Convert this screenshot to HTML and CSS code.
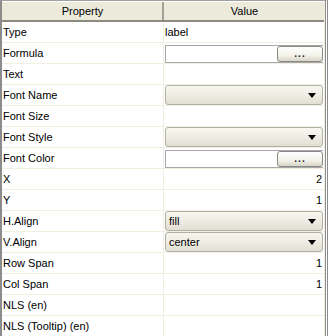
FILE: index.html
```html
<!DOCTYPE html>
<html lang="en">
<head>
    <meta charset="UTF-8">
    <title>Properties</title>
    <link rel="stylesheet" href="styles.css">
</head>
<body>
    <div class="panel">
        <div class="sheet">
            <div class="row head">
                <div class="cell key">Property</div>
                <div class="cell val">Value</div>
            </div>

            <div class="row">
                <div class="cell key">Type</div>
                <div class="cell val">label</div>
            </div>
            <div class="row">
                <div class="cell key">Formula</div>
                <div class="cell val">
                    <div class="field"><span class="dots">...</span></div>
                </div>
            </div>
            <div class="row">
                <div class="cell key">Text</div>
                <div class="cell val"></div>
            </div>
            <div class="row">
                <div class="cell key">Font Name</div>
                <div class="cell val">
                    <div class="combo"><span></span><i class="arrow"></i></div>
                </div>
            </div>
            <div class="row">
                <div class="cell key">Font Size</div>
                <div class="cell val"></div>
            </div>
            <div class="row">
                <div class="cell key">Font Style</div>
                <div class="cell val">
                    <div class="combo"><span></span><i class="arrow"></i></div>
                </div>
            </div>
            <div class="row">
                <div class="cell key">Font Color</div>
                <div class="cell val">
                    <div class="field"><span class="dots">...</span></div>
                </div>
            </div>
            <div class="row">
                <div class="cell key">X</div>
                <div class="cell val num">2</div>
            </div>
            <div class="row">
                <div class="cell key">Y</div>
                <div class="cell val num">1</div>
            </div>
            <div class="row">
                <div class="cell key">H.Align</div>
                <div class="cell val">
                    <div class="combo"><span>fill</span><i class="arrow"></i></div>
                </div>
            </div>
            <div class="row">
                <div class="cell key">V.Align</div>
                <div class="cell val">
                    <div class="combo"><span>center</span><i class="arrow"></i></div>
                </div>
            </div>
            <div class="row">
                <div class="cell key">Row Span</div>
                <div class="cell val num">1</div>
            </div>
            <div class="row">
                <div class="cell key">Col Span</div>
                <div class="cell val num">1</div>
            </div>
            <div class="row">
                <div class="cell key">NLS (en)</div>
                <div class="cell val"></div>
            </div>
            <div class="row">
                <div class="cell key">NLS (Tooltip) (en)</div>
                <div class="cell val"></div>
            </div>
        </div>
    </div>
</body>
</html>
```

FILE: styles.css
```css
body {
    margin: 0;
    font-family: "Liberation Sans", Arial, sans-serif;
    font-size: 11px;
    color: #000;
    background: #fff;
}

.panel {
    width: 328px;
    height: 336px;
    box-sizing: border-box;
    border-top: 1px solid #a0a0a0;
    border-left: 2px solid #8c8c8c;
    border-right: 3px double #8c8c8c;
    overflow: hidden;
}

.sheet {
    padding-top: 1px;
    border-right: 1px solid #f1efe2;
}

.row {
    display: grid;
    grid-template-columns: 162px 1fr;
    height: 21px;
    box-sizing: border-box;
    border-bottom: 1px solid #f1efe2;
}

.cell {
    display: flex;
    align-items: center;
    min-width: 0;
    white-space: nowrap;
}

.key {
    padding-left: 1px;
    border-right: 1px solid #f1efe2;
}

.val {
    padding-left: 1px;
}

.num {
    justify-content: flex-end;
    padding-right: 2px;
}

.head {
    height: 20px;
    background: #ebeadb;
    border-bottom: 2px solid #8b8a7e;
}

.head .cell {
    justify-content: center;
}

.head .key {
    border-right: 2px solid #a3a295;
}

/* text box with the "..." button */
.field {
    flex: 1;
    height: 18px;
    margin: 1px 1px 0 0;
    box-sizing: border-box;
    border: 1px solid #a7a6aa;
    border-right: none;
    display: flex;
    justify-content: flex-end;
}

.dots {
    width: 46px;
    height: 16px;
    box-sizing: border-box;
    border: 1px solid #8a8a85;
    border-radius: 3px;
    background: linear-gradient(#ffffff, #f3f2ea 60%, #d8d6c8);
    text-align: center;
    font-size: 10px;
    font-weight: bold;
    line-height: 14px;
    letter-spacing: 1px;
    color: #222;
}

/* drop-down */
.combo {
    flex: 1;
    height: 20px;
    margin-right: 1px;
    box-sizing: border-box;
    border: 1px solid #b1b0a6;
    border-radius: 3px;
    background: linear-gradient(#f8f7f0, #eceae0 60%, #e1dfd2);
    display: flex;
    align-items: center;
    justify-content: space-between;
    padding: 0 6px 0 3px;
}

.arrow {
    width: 0;
    height: 0;
    border-left: 4px solid transparent;
    border-right: 4px solid transparent;
    border-top: 5px solid #000;
}
```
